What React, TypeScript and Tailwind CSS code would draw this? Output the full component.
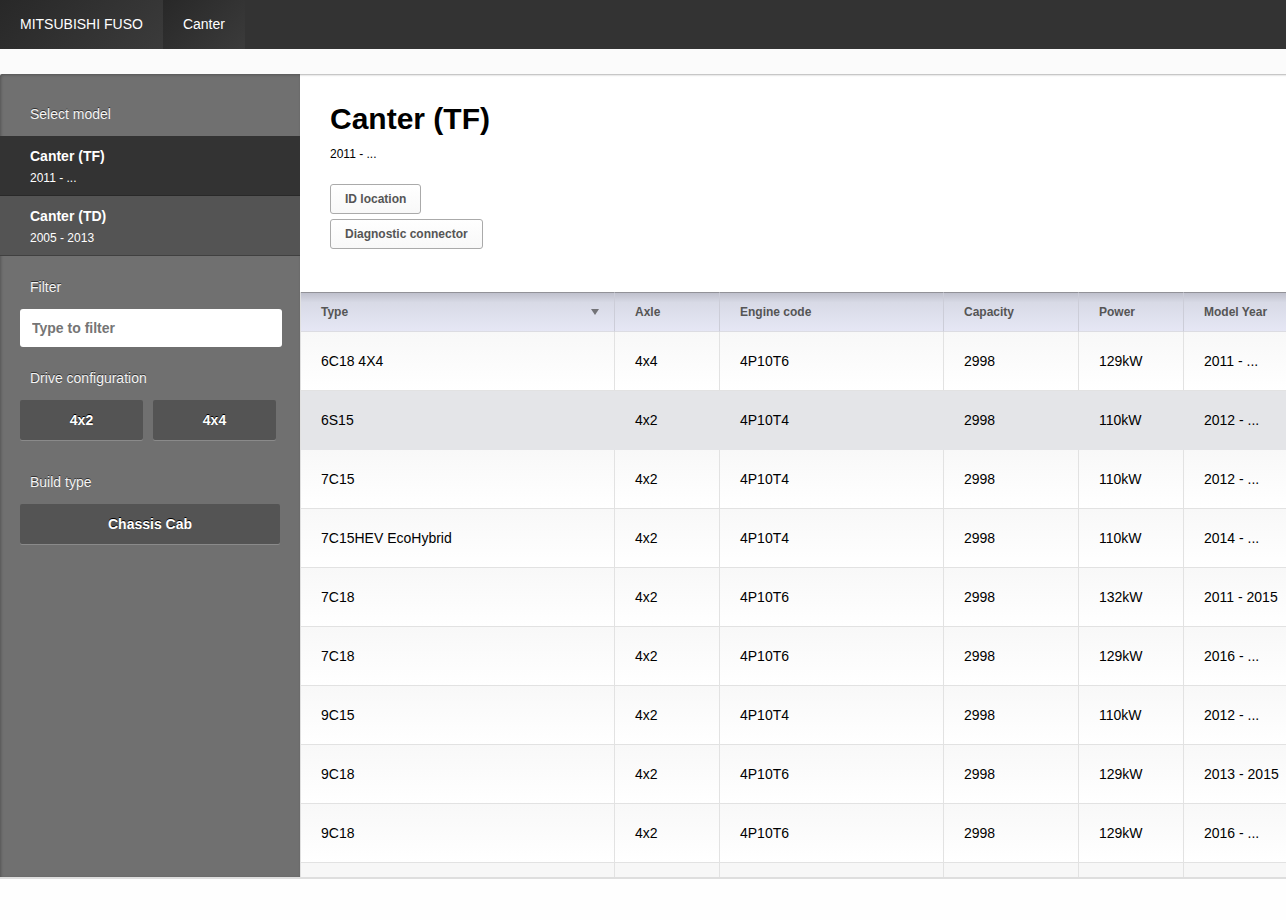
interface Vehicle {
  type: string
  axle: string
  engine: string
  capacity: string
  power: string
  year: string
}

const models = [
  { name: 'Canter (TF)', years: '2011 - ...', active: true },
  { name: 'Canter (TD)', years: '2005 - 2013', active: false },
]

const columns = ['Type', 'Axle', 'Engine code', 'Capacity', 'Power', 'Model Year']

const vehicles: Vehicle[] = [
  { type: '6C18 4X4', axle: '4x4', engine: '4P10T6', capacity: '2998', power: '129kW', year: '2011 - ...' },
  { type: '6S15', axle: '4x2', engine: '4P10T4', capacity: '2998', power: '110kW', year: '2012 - ...' },
  { type: '7C15', axle: '4x2', engine: '4P10T4', capacity: '2998', power: '110kW', year: '2012 - ...' },
  { type: '7C15HEV EcoHybrid', axle: '4x2', engine: '4P10T4', capacity: '2998', power: '110kW', year: '2014 - ...' },
  { type: '7C18', axle: '4x2', engine: '4P10T6', capacity: '2998', power: '132kW', year: '2011 - 2015' },
  { type: '7C18', axle: '4x2', engine: '4P10T6', capacity: '2998', power: '129kW', year: '2016 - ...' },
  { type: '9C15', axle: '4x2', engine: '4P10T4', capacity: '2998', power: '110kW', year: '2012 - ...' },
  { type: '9C18', axle: '4x2', engine: '4P10T6', capacity: '2998', power: '129kW', year: '2013 - 2015' },
  { type: '9C18', axle: '4x2', engine: '4P10T6', capacity: '2998', power: '129kW', year: '2016 - ...' },
]

const selectedRow = 1

function TopBar() {
  const crumb = 'bg-linear-135 from-[#282828] to-[#3b3b3b] px-5 py-3.5 leading-5'

  return (
    <nav className="flex h-[49px] shrink-0 bg-[#333333] text-sm text-white">
      <a href="#make" className={crumb}>
        MITSUBISHI FUSO
      </a>
      <a href="#model" className={crumb}>
        Canter
      </a>
    </nav>
  )
}

function FilterButton({ label }: { label: string }) {
  return (
    <button className="h-10 flex-1 rounded-xs bg-[#545454] text-sm font-bold shadow-[0_1px_0_#8a8a8a] text-shadow-[0_-1px_0_#000]">
      {label}
    </button>
  )
}

function Sidebar() {
  return (
    <aside className="w-[300px] shrink-0 rounded-tl-xs bg-[#707070] text-sm leading-5 text-white shadow-[inset_1px_1px_3px_rgba(0,0,0,0.25)] text-shadow-[0_-1px_0_#333]">
      <h2 className="px-[30px] pt-[30px] pb-3 text-[#f4f4f4]">Select model</h2>
      <ul>
        {models.map((m) => (
          <li key={m.name}>
            <button
              className={`block h-[60px] w-full border-b px-[30px] pt-0.5 text-left ${
                m.active ? 'border-[#292929] bg-[#333333]' : 'border-[#404040] bg-[#545454]'
              }`}
            >
              <span className="block font-bold">{m.name}</span>
              <span className="block pt-0.5 text-xs leading-5">{m.years}</span>
            </button>
          </li>
        ))}
      </ul>

      <div className="px-5 text-[#f4f4f4]">
        <label htmlFor="filter" className="block px-2.5 pt-[21px] pb-3">
          Filter
        </label>
        <input
          id="filter"
          type="text"
          placeholder="Type to filter"
          className="block h-[38px] w-[262px] rounded-[3px] bg-white px-3 text-sm font-bold text-[#333] placeholder:text-[#757575] text-shadow-none"
        />
        <h3 className="px-2.5 pt-[21px] pb-3">Drive configuration</h3>
        <div className="mr-1 flex gap-2.5 text-white">
          <FilterButton label="4x2" />
          <FilterButton label="4x4" />
        </div>
        <h3 className="px-2.5 pt-8 pb-3">Build type</h3>
        <div className="flex text-white">
          <FilterButton label="Chassis Cab" />
        </div>
      </div>
    </aside>
  )
}

function VehicleTable() {
  return (
    <table className="w-full table-fixed border-separate border-spacing-0 border-l border-[#e0e0e0] text-left">
      <colgroup>
        <col />
        <col className="w-[105px]" />
        <col className="w-[224px]" />
        <col className="w-[135px]" />
        <col className="w-[105px]" />
        <col className="w-[102px]" />
      </colgroup>
      <thead>
        <tr>
          {columns.map((c) => (
            <th
              key={c}
              className="h-10 border-t border-r border-b border-t-[#929298] border-r-[#cccdd8] border-b-[#dcdce2] bg-linear-to-b from-[#bfc0cc] via-[#d8dae6] via-25% to-[#e6e7f5] pl-5 text-xs font-bold whitespace-nowrap text-[#555] last:border-r-0"
            >
              {c === 'Type' ? (
                <span className="flex items-center justify-between pr-3.5">
                  {c}
                  <svg width="10" height="6" viewBox="0 0 10 6" aria-hidden="true">
                    <path d="M1 0h8L5 6z" fill="#737377" />
                  </svg>
                </span>
              ) : (
                c
              )}
            </th>
          ))}
        </tr>
      </thead>
      <tbody className="text-sm text-black">
        {vehicles.map((v, i) => (
          <tr key={i}>
            {[v.type, v.axle, v.engine, v.capacity, v.power, v.year].map((cell, j) => (
              <td
                key={j}
                className={`h-[59px] border-r border-b pl-5 whitespace-nowrap last:border-r-0 ${
                  i === selectedRow
                    ? 'border-[#e4e5e8] bg-[#e4e5e8]'
                    : 'border-[#e2e2e2] bg-linear-to-b from-[#f8f8f8] to-white'
                }`}
              >
                {cell}
              </td>
            ))}
          </tr>
        ))}
        <tr aria-hidden="true">
          {columns.map((c) => (
            <td key={c} className="h-[59px] border-r border-[#e2e2e2] bg-[#f7f7f7] last:border-r-0" />
          ))}
        </tr>
      </tbody>
    </table>
  )
}

export default function App() {
  const toolButton =
    'h-[30px] rounded-[3px] border border-[#aaa] bg-linear-to-b from-white to-[#f8f8f8] px-3.5 text-xs font-bold text-[#555]'

  return (
    <div className="flex h-screen flex-col bg-[#fefefe] font-['Liberation_Sans',Arial,sans-serif]">
      <TopBar />
      <div className="h-[25px] shrink-0 bg-[#fbfbfb]" />
      <div className="mb-[41px] flex min-h-0 flex-1 overflow-hidden border-b-2 border-[#dedede] bg-white">
        <Sidebar />
        <main className="min-w-0 flex-1 overflow-hidden shadow-[inset_0_3px_2px_-2px_rgba(0,0,0,0.3)]">
          <header className="px-[30px] pt-[27px] pb-[43px]">
            <h1 className="text-[30px] leading-9 font-bold text-black">Canter (TF)</h1>
            <p className="pt-[7px] text-xs leading-5 text-black">2011 - ...</p>
            <div className="flex flex-col items-start gap-[5px] pt-5">
              <button className={toolButton}>ID location</button>
              <button className={toolButton}>Diagnostic connector</button>
            </div>
          </header>
          <VehicleTable />
        </main>
      </div>
    </div>
  )
}
